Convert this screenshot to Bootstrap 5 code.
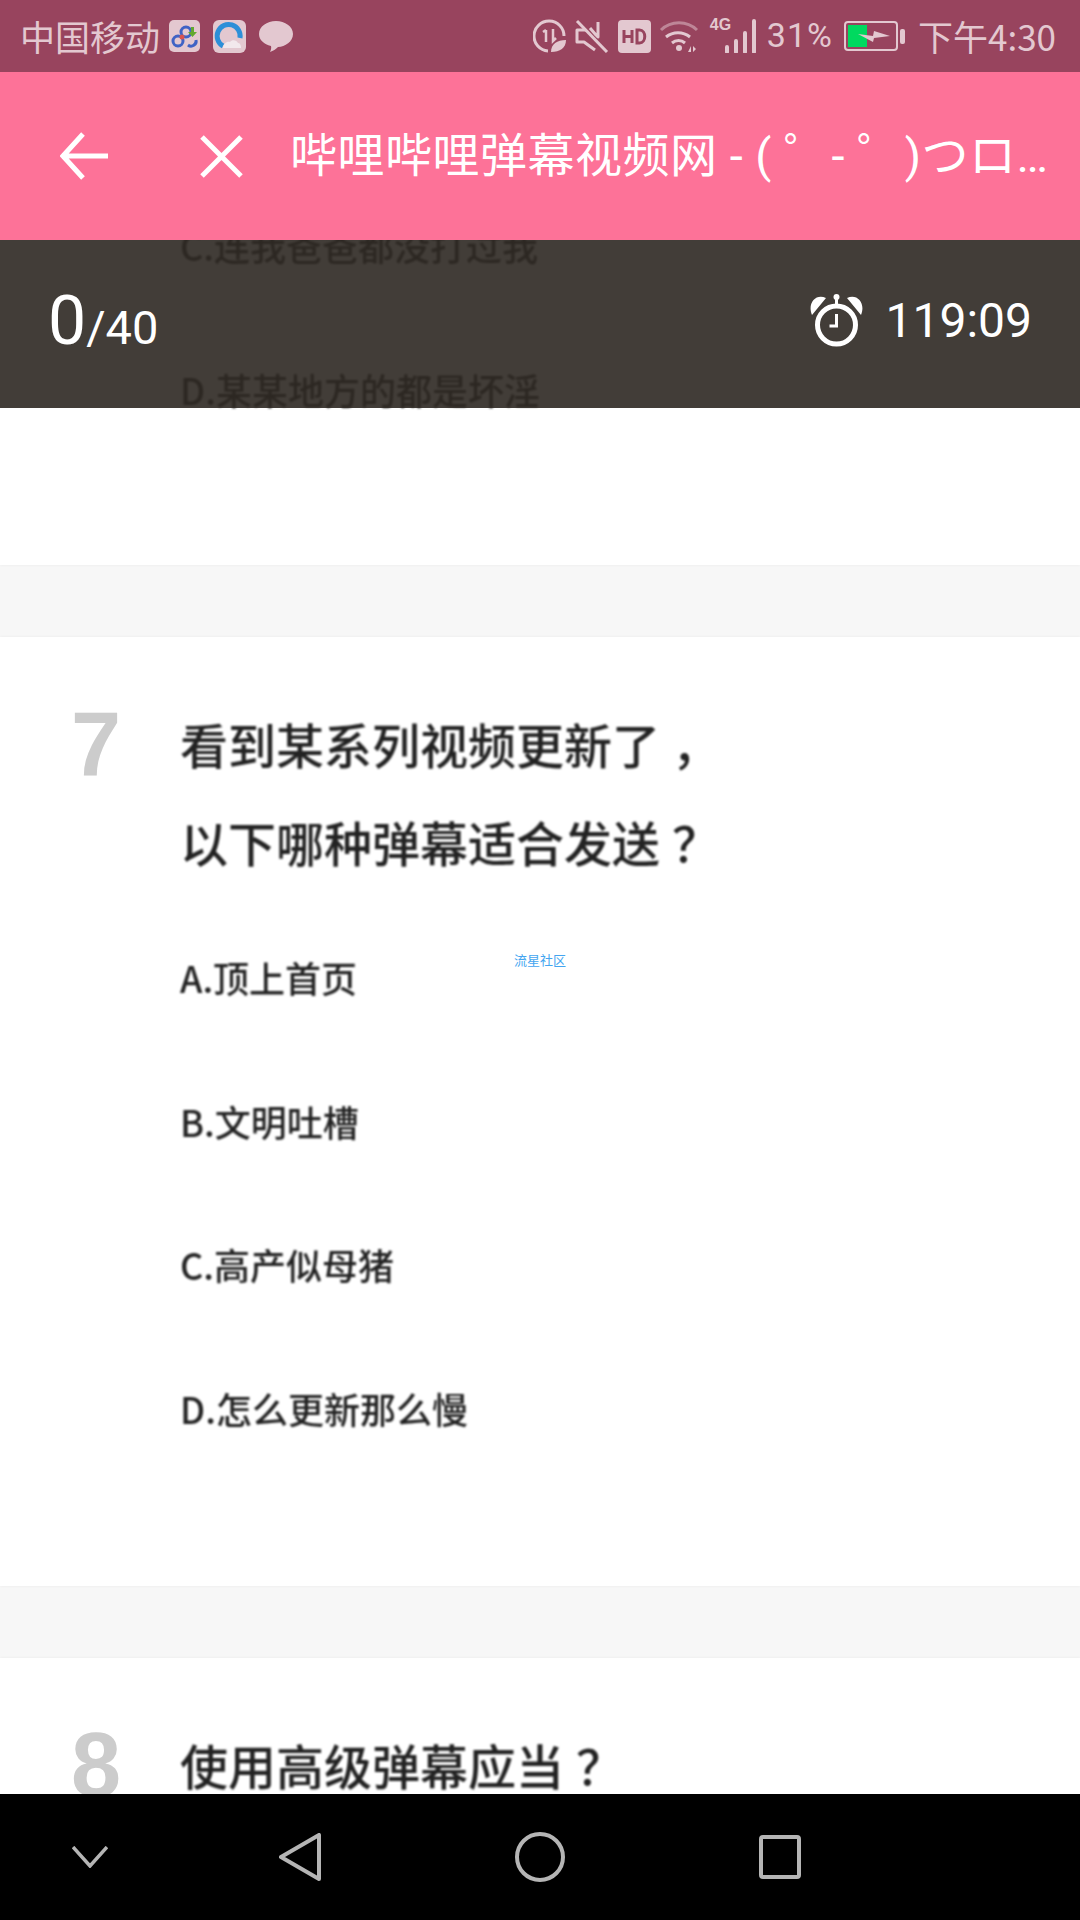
<!DOCTYPE html>
<html lang="zh-CN">
<head>
    <meta charset="UTF-8" />
    <meta name="viewport" content="width=device-width, initial-scale=1.0" />
    <link href="https://cdn.jsdelivr.net/npm/bootstrap@5.3.3/dist/css/bootstrap.min.css" rel="stylesheet" />
    <script src="https://cdn.jsdelivr.net/npm/bootstrap@5.3.3/dist/js/bootstrap.bundle.min.js"></script>
    <title>哔哩哔哩弹幕视频网</title>
    <style>
        html, body { margin: 0; background: #000; }
        .phone { width: 1080px; height: 1920px; overflow: hidden; font-family: Roboto, "Noto Sans CJK SC", sans-serif; }
        .status-bar { height: 72px; flex: none; background: #98445e; color: #e3c8d0; font-size: 33px; line-height: 72px; padding: 0 24px 0 20px; }
        .carrier { font-family: "Noto Sans CJK SC", sans-serif; font-size: 35px; width: 149px; }
        .status-icons-left { gap: 13px; }
        .status-pct { font-family: Roboto, sans-serif; font-size: 34px; margin: -3px 11px 0 8px; letter-spacing: 1px; }
        .status-time { font-family: "Noto Sans CJK SC", Roboto, sans-serif; font-size: 35px; margin-left: 12px; }
        .net-type { left: 3px; top: -2px; font: 700 16px/16px "Liberation Sans", sans-serif; }
        .signal-box { width: 52px; height: 34px; }
        .signal-bars { left: 18px; top: 0; }
        .toolbar { height: 168px; flex: none; background: #fd7298; color: #fff; padding-left: 60px; }
        .close-btn { margin-left: 92px; }
        .page-title { font-family: Roboto, "Noto Sans CJK SC", sans-serif; font-size: 47px; width: 768px; margin-left: 47px; letter-spacing: .5px; }
        .scroll-view { flex: 1 1 0; min-height: 0; background: #f7f7f7; overflow: hidden; }
        .quiz-head { top: 0; left: 0; right: 0; height: 168px; background: rgba(45, 40, 34, .9); color: #fff; padding: 0 48px 6px; z-index: 2; }
        .score-big { font-size: 68px; line-height: 1; }
        .score-rest { font-size: 47px; line-height: 1; }
        .timer { font-size: 48px; gap: 22px; }
        .q-card { background: #fff; padding: 57px 40px 106px 71px; margin-bottom: 72px; box-shadow: 0 0 3px rgba(0, 0, 0, .06); }
        .q-card-prev { padding: 0 40px 104px 180px; margin-top: -66px; }
        .q-num { width: 109px; flex: none; color: #ccc; font-family: "Liberation Sans", sans-serif; font-weight: 700; font-size: 90px; line-height: 90px; padding-top: 5px; }
        .q-text { font-family: "Noto Sans CJK SC", sans-serif; font-weight: 500; color: #222; font-size: 48px; line-height: 98px; filter: blur(.8px); margin-bottom: 16px; }
        .q-punct { margin-left: 12px; }
        .q-opt { font-family: "Noto Sans CJK SC", sans-serif; font-weight: 500; color: #222; font-size: 36px; line-height: 143.5px; filter: blur(.8px); }
        .watermark { top: 712px; left: 514px; font-family: "Noto Sans CJK SC", sans-serif; font-size: 13px; line-height: 16px; color: #44a5f0; z-index: 1; }
        .nav-bar { height: 126px; flex: none; background: #000; padding-left: 72px; }
        .nav-back { margin-left: 171px; }
        .nav-home, .nav-recent { margin-left: 194px; }
    </style>
</head>
<body>
<div class="phone d-flex flex-column">
    <div class="status-bar d-flex align-items-center">
        <span class="carrier">中国移动</span>
        <div class="d-flex align-items-center status-icons-left">
            <svg width="31" height="32" viewBox="0 0 31 32"><rect width="31" height="32" rx="5" fill="#e3c8d0"/><circle cx="9" cy="21" r="5" fill="none" stroke="#3f63c5" stroke-width="3"/><circle cx="17" cy="12" r="5" fill="none" stroke="#3f63c5" stroke-width="3"/><path d="M19 25a5 5 0 0 0 8-5" fill="none" stroke="#3f63c5" stroke-width="3"/><circle cx="13" cy="17" r="2.500" fill="#d9534f"/><path d="M22 7h3v5h3l-4.500 5-4.500-5h3z" fill="#62a82f"/></svg>
            <svg width="33" height="33" viewBox="0 0 33 33"><rect width="33" height="33" rx="6" fill="#e3c8d0"/><path d="M10 26A11.500 11.500 0 1 1 27 18" fill="none" stroke="#2d8fd8" stroke-width="5"/><path d="M10 28c0-4 4-7 7-6 2-3 7-2 8 1 2 0 3 2 3 5z" fill="#f2e8ec"/></svg>
            <svg width="34" height="33" viewBox="0 0 34 33"><path d="M17 1c9 0 17 5.500 17 13s-8 13-15 13c-2 2-5 4-8 5 1-2 1.500-4 1-6C5 24 0 20 0 14 0 6.500 8 1 17 1z" fill="#e3c8d0"/></svg>
        </div>
        <div class="d-flex align-items-center ms-auto">
            <svg width="33" height="34" viewBox="0 0 33 34" fill="none" stroke="#e3c8d0"><path d="M15 32A15 15 0 1 1 31 17" stroke-width="3"/><path d="M13 11v12M10 13l3-2M20 10v12l3-3" stroke-width="2.500"/><path d="M18 33c0-8 6-12 15-12 0 8-6 12-15 12z" fill="#e3c8d0" stroke="none"/></svg>
            <svg class="ms-2" width="36" height="34" viewBox="0 0 36 34" fill="none" stroke="#e3c8d0" stroke-width="3"><path d="M3 2l30 31"/><path d="M12 11H3v12h7l11 8M24 3v15l-2-2-6-7" stroke-linejoin="round"/></svg>
            <svg class="ms-2" width="33" height="33" viewBox="0 0 33 33"><rect width="33" height="33" rx="4" fill="#e3c8d0"/><path d="M6 10v13M14 10v13M6 16.500h8" stroke="#98445e" stroke-width="3" fill="none"/><path d="M19 10v13h2.500c7 0 7-13 0-13z" stroke="#98445e" stroke-width="3" fill="none"/></svg>
            <svg class="ms-2" width="40" height="34" viewBox="0 0 40 34" fill="none" stroke="#e3c8d0" stroke-width="3"><path d="M2 11A26 26 0 0 1 38 11" opacity=".5"/><path d="M7 18a19 19 0 0 1 24 0M13 24a10 10 0 0 1 13 0"/><circle cx="20" cy="29" r="3" fill="#e3c8d0" stroke="none"/><path d="M29 33l3-6v6zM34 27v6l3-3z" fill="#e3c8d0" stroke="none"/></svg>
            <div class="position-relative ms-2 signal-box">
                <span class="position-absolute net-type">4G</span>
                <svg class="position-absolute signal-bars" width="34" height="34" viewBox="0 0 34 34"><path d="M2 28v5M11 22v11M20 14v19M29 2v31" stroke="#e3c8d0" stroke-width="4" stroke-linecap="round"/></svg>
            </div>
            <span class="status-pct">31%</span>
            <svg width="62" height="30" viewBox="0 0 62 30"><rect x="1" y="1" width="52" height="28" rx="3" fill="none" stroke="#e3c8d0" stroke-width="2"/><rect x="4" y="4" width="19" height="22" fill="#00d95f"/><path d="M14 13l15 2 1-5 16 5-16 2-1 4z" fill="#e3c8d0"/><rect x="56" y="8" width="5" height="15" rx="2" fill="#e3c8d0"/></svg>
            <span class="status-time">下午4:30</span>
        </div>
    </div>
    <div class="toolbar d-flex align-items-center">
        <svg width="48" height="48" viewBox="0 0 48 48" fill="none" stroke="#fff" stroke-width="5"><path d="M48 24H3M23 2L3 24l20 22"/></svg>
        <svg class="close-btn" width="43" height="43" viewBox="0 0 43 43" fill="none" stroke="#fff" stroke-width="5"><path d="M2 2l39 39M41 2L2 41"/></svg>
        <div class="page-title text-truncate">哔哩哔哩弹幕视频网 - ( ゜- ゜)つロ 乾杯~ - bilibili</div>
    </div>
    <div class="scroll-view position-relative">
        <div class="quiz-head position-absolute d-flex align-items-center justify-content-between">
            <div><span class="score-big">0</span><span class="score-rest">/40</span></div>
            <div class="timer d-flex align-items-center">
                <svg width="53" height="56" viewBox="0 0 53 56" fill="none" stroke="#fff"><circle cx="26.500" cy="32" r="19" stroke-width="5"/><path d="M26.500 21v12h-7" stroke-width="3"/><path d="M2 22C-3 10 6 0 16 5zM51 22c5-12-4-22-14-17z" fill="#fff" stroke="none"/><circle cx="26.500" cy="4" r="3" fill="#fff" stroke="none"/><path d="M26.500 5v8" stroke-width="3"/></svg>
                <span>119:09</span>
            </div>
        </div>
        <div class="watermark position-absolute">流星社区</div>

        <div class="q-card q-card-prev">
            <div class="q-opt">C.连我爸爸都没打过我</div>
            <div class="q-opt">D.某某地方的都是坏淫</div>
        </div>

        <div class="q-card d-flex">
            <div class="q-num">7</div>
            <div>
                <div class="q-text">看到某系列视频更新了<span class="q-punct">，</span><br>以下哪种弹幕适合发送<span class="q-punct">？</span></div>
                <div class="q-opt">A.顶上首页</div>
                <div class="q-opt">B.文明吐槽</div>
                <div class="q-opt">C.高产似母猪</div>
                <div class="q-opt">D.怎么更新那么慢</div>
            </div>
        </div>

        <div class="q-card d-flex">
            <div class="q-num">8</div>
            <div>
                <div class="q-text">使用高级弹幕应当<span class="q-punct">？</span></div>
            </div>
        </div>
    </div>
    <div class="nav-bar d-flex align-items-center">
        <svg width="36" height="22" viewBox="0 0 36 22" fill="none" stroke="#b5b5b5" stroke-width="3.500"><path d="M1 1l17 19L35 1"/></svg>
        <svg class="nav-back" width="42" height="48" viewBox="0 0 42 48" fill="none" stroke="#b5b5b5" stroke-width="4" stroke-linejoin="round"><path d="M40 2v44L2 24z"/></svg>
        <svg class="nav-home" width="50" height="50" viewBox="0 0 50 50" fill="none" stroke="#b5b5b5" stroke-width="4"><circle cx="25" cy="25" r="23"/></svg>
        <svg class="nav-recent" width="42" height="44" viewBox="0 0 42 44" fill="none" stroke="#b5b5b5" stroke-width="4"><rect x="2" y="2" width="38" height="40" rx="2"/></svg>
    </div>
</div>
</body>
</html>
